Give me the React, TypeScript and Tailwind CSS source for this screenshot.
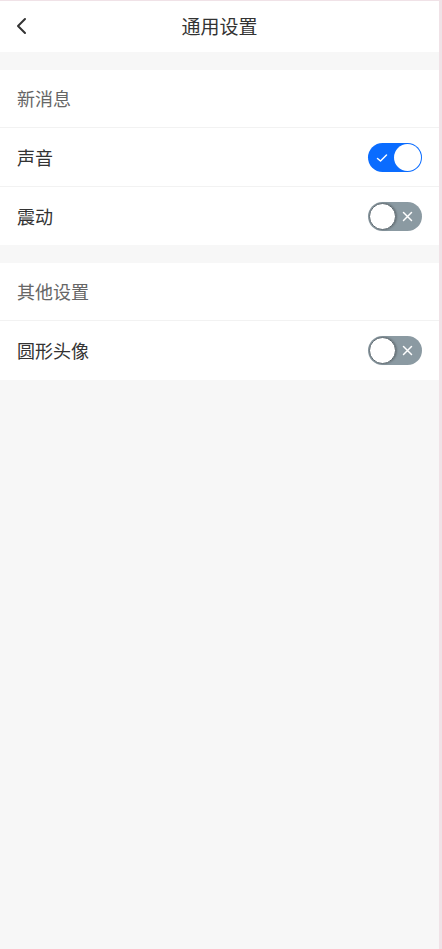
import React, { useState } from "react"

function Toggle({ on, onChange }: { on: boolean; onChange: () => void }) {
  return (
    <button
      onClick={onChange}
      className={`relative flex h-[29px] w-[54px] items-center rounded-full ${on ? "bg-[#0a6cff]" : "bg-[#8b9aa2]"}`}
    >
      {on ? (
        <>
          <svg className="absolute left-[8px] top-[9px]" width="12" height="12" viewBox="0 0 12 12">
            <path d="M1.5 6.5 L4.5 9 L10.5 3" fill="none" stroke="white" strokeWidth="1.5" strokeLinecap="round" strokeLinejoin="round" />
          </svg>
          <span className="absolute right-[1px] top-[1px] h-[27px] w-[27px] rounded-full bg-white" />
        </>
      ) : (
        <>
          <span className="absolute left-[1px] top-[1px] h-[27px] w-[27px] rounded-full border border-[#5f6b72] bg-white shadow-[1px_0_2px_rgba(0,0,0,0.25)]" />
          <svg className="absolute right-[9px] top-[9px]" width="11" height="11" viewBox="0 0 11 11">
            <path d="M1.5 1.5 L9.5 9.5 M9.5 1.5 L1.5 9.5" fill="none" stroke="white" strokeWidth="1.5" strokeLinecap="round" />
          </svg>
        </>
      )}
    </button>
  )
}

export default function App() {
  const [sound, setSound] = useState(true)
  const [vibrate, setVibrate] = useState(false)
  const [round, setRound] = useState(false)

  return (
    <div
      className="min-h-[949px] border-t border-r-[3px] border-[#f0e2e7] bg-[#f7f7f7] text-[#333]"
      style={{ fontFamily: '"Noto Sans CJK SC", "Noto Sans", sans-serif' }}
    >
      {/* Header */}
      <div className="relative flex h-[51px] items-center justify-center bg-white">
        <svg className="absolute left-[15px] top-[16px]" width="14" height="18" viewBox="0 0 14 18">
          <path d="M10 2 L3 9 L10 16" fill="none" stroke="#333" strokeWidth="2" strokeLinecap="round" strokeLinejoin="round" />
        </svg>
        <span className="text-[19px]">通用设置</span>
      </div>

      {/* 新消息 */}
      <div className="mt-[18px] bg-white">
        <div className="flex h-[58px] items-center border-b border-[#f2f2f2] px-[17px] text-[18px] text-[#666]">新消息</div>
        <div className="flex h-[59px] items-center justify-between border-b border-[#f2f2f2] pl-[17px] pr-[17px] text-[18px]">
          <span>声音</span>
          <Toggle on={sound} onChange={() => setSound(!sound)} />
        </div>
        <div className="flex h-[58px] items-center justify-between pl-[17px] pr-[17px] text-[18px]">
          <span>震动</span>
          <Toggle on={vibrate} onChange={() => setVibrate(!vibrate)} />
        </div>
      </div>

      {/* 其他设置 */}
      <div className="mt-[18px] bg-white">
        <div className="flex h-[58px] items-center border-b border-[#f2f2f2] px-[17px] text-[18px] text-[#666]">其他设置</div>
        <div className="flex h-[59px] items-center justify-between pl-[17px] pr-[17px] text-[18px]">
          <span>圆形头像</span>
          <Toggle on={round} onChange={() => setRound(!round)} />
        </div>
      </div>
    </div>
  )
}
